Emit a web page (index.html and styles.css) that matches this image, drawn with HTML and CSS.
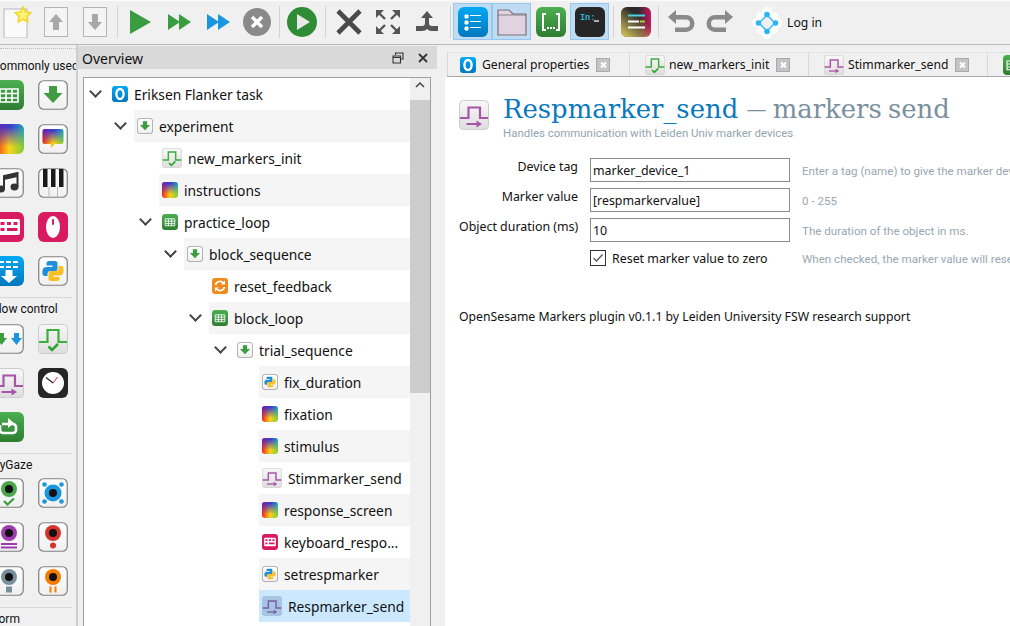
FILE: index.html
```html
<!DOCTYPE html>
<html lang="en">
<head>
<meta charset="utf-8">
<title>OpenSesame</title>
<link rel="stylesheet" href="styles.css">
</head>
<body>
<svg class="defs" width="0" height="0" aria-hidden="true">
  <defs>
    <linearGradient id="gTile" x1="0" y1="0" x2="0" y2="1"><stop offset="0" stop-color="#ffffff"/><stop offset="1" stop-color="#f0f0f0"/></linearGradient>
    <linearGradient id="gMark" x1="0" y1="0" x2="0" y2="1"><stop offset="0" stop-color="#f8f8f8"/><stop offset="1" stop-color="#dedede"/></linearGradient>
    <linearGradient id="gGreen" x1="0" y1="0" x2="0" y2="1"><stop offset="0" stop-color="#4caf50"/><stop offset="1" stop-color="#2e7d32"/></linearGradient>
    <linearGradient id="gBlue" x1="0" y1="0" x2="0" y2="1"><stop offset="0" stop-color="#03a9f4"/><stop offset="1" stop-color="#0277bd"/></linearGradient>
    <linearGradient id="gTop" x1="0" y1="0" x2="1" y2="0"><stop offset="0" stop-color="#6a1fb8"/><stop offset=".55" stop-color="#3f3fc8"/><stop offset="1" stop-color="#1fa0c8"/></linearGradient>
    <linearGradient id="gBot" x1="0" y1="0" x2="1" y2="0"><stop offset="0" stop-color="#e8281e"/><stop offset=".5" stop-color="#fbd21a"/><stop offset="1" stop-color="#7ecb3a"/></linearGradient>
    <linearGradient id="gFade" x1="0" y1="0" x2="0" y2="1"><stop offset=".1" stop-color="#fff"/><stop offset=".75" stop-color="#000"/></linearGradient>
    <mask id="mFade" maskContentUnits="objectBoundingBox"><rect width="1" height="1" fill="url(#gFade)"/></mask>
    <linearGradient id="gReport" x1="0" y1="0" x2="1" y2="0"><stop offset="0" stop-color="#222222"/><stop offset=".55" stop-color="#2a2a2a"/><stop offset="1" stop-color="#c2185b"/></linearGradient>
    <linearGradient id="gReport2" x1="0" y1="1" x2=".6" y2=".3"><stop offset="0" stop-color="#e0d060"/><stop offset="1" stop-color="#e0d060" stop-opacity="0"/></linearGradient>

    <symbol id="i-osexp" viewBox="0 0 16 16"><rect width="16" height="16" rx="3" fill="url(#gBlue)"/><ellipse cx="8" cy="8" rx="3.6" ry="5" fill="none" stroke="#fff" stroke-width="2.4"/></symbol>
    <symbol id="i-seq" viewBox="0 0 30 30"><rect x=".75" y=".75" width="28.500" height="28.500" rx="5" fill="url(#gTile)" stroke="#808080" stroke-width="1.2"/><path d="M11 6h8v7h5.500L15 23 5.500 13H11z" fill="#3f9c41"/></symbol>
    <symbol id="i-loop" viewBox="0 0 30 30"><rect width="30" height="30" rx="6" fill="url(#gGreen)"/><path d="M6 9h18v13H6zM6 13.500h18M6 18h18M12 9v13M18 9v13" fill="none" stroke="#fff" stroke-width="1.600"/></symbol>
    <symbol id="i-sketch" viewBox="0 0 30 30"><rect width="30" height="30" rx="6" fill="url(#gBot)"/><rect width="30" height="30" rx="6" fill="url(#gTop)" mask="url(#mFade)"/></symbol>
    <symbol id="i-bubble" viewBox="0 0 30 30"><rect x=".75" y=".75" width="28.500" height="28.500" rx="5" fill="url(#gTile)" stroke="#808080" stroke-width="1.2"/><path d="M7 5h16a2.500 2.500 0 0 1 2.500 2.500v10a2.500 2.500 0 0 1-2.500 2.500h-6l-4 4v-4H7a2.500 2.500 0 0 1-2.500-2.500v-10A2.500 2.500 0 0 1 7 5z" fill="url(#gBot)"/><path d="M7 5h16a2.500 2.500 0 0 1 2.500 2.500v10a2.500 2.500 0 0 1-2.500 2.500h-6l-4 4v-4H7a2.500 2.500 0 0 1-2.500-2.500v-10A2.500 2.500 0 0 1 7 5z" fill="url(#gTop)" mask="url(#mFade)"/></symbol>
    <symbol id="i-music" viewBox="0 0 30 30"><rect x=".75" y=".75" width="28.500" height="28.500" rx="5" fill="url(#gTile)" stroke="#808080" stroke-width="1.2"/><ellipse cx="7" cy="21" rx="4" ry="3.400" fill="#333"/><ellipse cx="20.500" cy="19" rx="4" ry="3.400" fill="#333"/><path d="M10 21V8l13.500-3v14" fill="none" stroke="#333" stroke-width="2"/><path d="M10 8l13.500-3v4L10 12z" fill="#333"/></symbol>
    <symbol id="i-piano" viewBox="0 0 30 30"><rect x=".75" y=".75" width="28.500" height="28.500" rx="5" fill="url(#gTile)" stroke="#808080" stroke-width="1.2"/><path d="M5 1h4.500v18H5zM13 1h4.500v18H13zM21 1h4.500v18H21z" fill="#1b1b1b"/><path d="M11 19v10M19.500 19v10" stroke="#bbb"/></symbol>
    <symbol id="i-kbd" viewBox="0 0 30 30"><rect width="30" height="30" rx="6" fill="#d81b60"/><rect x="4" y="7" width="22" height="16" rx="2" fill="#fff"/><path d="M6.500 10h4v3h-4zM13 10h4v3h-4zM19.500 10h4v3h-4zM6.500 16h4v3h-4zM13 16h10.500v3H13z" fill="#d81b60"/></symbol>
    <symbol id="i-mouse" viewBox="0 0 30 30"><rect width="30" height="30" rx="6" fill="#d81b60"/><ellipse cx="15" cy="15" rx="7" ry="11" fill="#fff"/><rect x="14" y="7" width="2" height="6" rx="1" fill="#d81b60"/></symbol>
    <symbol id="i-form" viewBox="0 0 30 30"><rect width="30" height="30" rx="6" fill="url(#gBlue)"/><path d="M5 6h5M12 6h5M19 6h5M5 11h5M12 11h5M19 11h5" stroke="#fff" stroke-width="2"/><path d="M11.500 14h7v6h4.500L15 27 7 20h4.500z" fill="#fff"/></symbol>
    <symbol id="i-py" viewBox="0 0 30 30"><rect x=".75" y=".75" width="28.500" height="28.500" rx="5" fill="url(#gTile)" stroke="#808080" stroke-width="1.2"/><path d="M11 5h6a2.500 2.500 0 0 1 2.500 2.500V13a2 2 0 0 1-2 2h-5a3 3 0 0 0-3 3v2H7a2.500 2.500 0 0 1-2.500-2.500v-3A4 4 0 0 1 8.500 11h6V9.500h-6V7.500A2.500 2.500 0 0 1 11 5z" fill="#1f8fd8"/><path d="M19 25h-6a2.500 2.500 0 0 1-2.500-2.500V17a2 2 0 0 1 2-2h5a3 3 0 0 0 3-3v-2H23a2.500 2.500 0 0 1 2.500 2.500v3a4 4 0 0 1-4 4h-6v1.500h6v2A2.500 2.500 0 0 1 19 25z" fill="#f9bf25"/></symbol>
    <symbol id="i-coroutines" viewBox="0 0 30 30"><rect x=".75" y=".75" width="28.500" height="28.500" rx="5" fill="url(#gTile)" stroke="#808080" stroke-width="1.2"/><path d="M5 9h5v5h3l-5.500 7L2 14h3z" fill="#3f9c41"/><path d="M20 9h5v5h3l-5.500 7L17 14h3z" fill="#1a96e0"/></symbol>
    <symbol id="i-minit" viewBox="0 0 30 30"><rect x=".5" y=".5" width="29" height="29" rx="4" fill="url(#gMark)" stroke="#ccc"/><path d="M1 18h8.500V6h11v12H29" fill="none" stroke="#3cae3c" stroke-width="2.200"/><path d="M10.500 22.500l3.500 3.500 6-6" fill="none" stroke="#2ea52e" stroke-width="2.600"/></symbol>
    <symbol id="i-msend" viewBox="0 0 30 30"><rect x=".5" y=".5" width="29" height="29" rx="4" fill="url(#gMark)" stroke="#ccc"/><path d="M1 18h8.500V7.500H21V18h8" fill="none" stroke="#a855a8" stroke-width="2.200"/><path d="M7.500 24h11" stroke="#a855a8" stroke-width="2"/><path d="M17.500 20.500l5.500 3.500-5.500 3.500z" fill="#a855a8"/></symbol>
    <symbol id="i-msel" viewBox="0 0 30 30"><rect x=".5" y=".5" width="29" height="29" rx="4" fill="#a8c4e2" stroke="#a0bcd8"/><path d="M1 18h8.500V7.500H21V18h8" fill="none" stroke="#7460a8" stroke-width="2.200"/><path d="M7.500 24h11" stroke="#7460a8" stroke-width="2"/><path d="M17.500 20.500l5.500 3.500-5.500 3.500z" fill="#7460a8"/></symbol>
    <symbol id="i-clock" viewBox="0 0 30 30"><rect width="30" height="30" rx="6" fill="#262626"/><circle cx="15" cy="15" r="11" fill="#fff"/><path d="M15 15L8 9.500" stroke="#222" stroke-width="1.200"/><path d="M15 15l4.500-6" stroke="#d33" stroke-width="1"/></symbol>
    <symbol id="i-repeat" viewBox="0 0 30 30"><rect width="30" height="30" rx="6" fill="url(#gGreen)"/><path d="M8 12h11a3 3 0 0 1 3 3v3a3 3 0 0 1-3 3H9a3 3 0 0 1-3-3v-5" fill="none" stroke="#fff" stroke-width="2.600"/><path d="M14 6l6 5-6 5z" fill="#fff"/></symbol>
    <symbol id="i-gz-green" viewBox="0 0 30 30"><rect x=".75" y=".75" width="28.500" height="28.500" rx="5" fill="url(#gTile)" stroke="#808080" stroke-width="1.2"/><circle cx="15" cy="11" r="8" fill="#4ca64c"/><circle cx="15" cy="11" r="4" fill="#111"/><path d="M10 23l3.500 3.500L20 20.500" fill="none" stroke="#3f9c41" stroke-width="2.200"/></symbol>
    <symbol id="i-gz-blue" viewBox="0 0 30 30"><rect x=".75" y=".75" width="28.500" height="28.500" rx="5" fill="url(#gTile)" stroke="#808080" stroke-width="1.2"/><circle cx="15" cy="15" r="8.500" fill="#1a96e0"/><circle cx="15" cy="15" r="4" fill="#111"/><circle cx="6.500" cy="6.500" r="2.300" fill="#1a96e0"/><circle cx="23.500" cy="6.500" r="2.300" fill="#1a96e0"/><circle cx="6.500" cy="23.500" r="2.300" fill="#1a96e0"/><circle cx="23.500" cy="23.500" r="2.300" fill="#1a96e0"/></symbol>
    <symbol id="i-gz-purple" viewBox="0 0 30 30"><rect x=".75" y=".75" width="28.500" height="28.500" rx="5" fill="url(#gTile)" stroke="#808080" stroke-width="1.2"/><circle cx="15" cy="11" r="8" fill="#9c3cb0"/><circle cx="15" cy="11" r="4" fill="#111"/><path d="M7 22h16M7 25.500h16" stroke="#9c3cb0" stroke-width="2"/></symbol>
    <symbol id="i-gz-red" viewBox="0 0 30 30"><rect x=".75" y=".75" width="28.500" height="28.500" rx="5" fill="url(#gTile)" stroke="#808080" stroke-width="1.2"/><circle cx="15" cy="11" r="8" fill="#d8322e"/><circle cx="15" cy="11" r="4" fill="#111"/><circle cx="15" cy="23.500" r="3" fill="#d8322e"/></symbol>
    <symbol id="i-gz-grey" viewBox="0 0 30 30"><rect x=".75" y=".75" width="28.500" height="28.500" rx="5" fill="url(#gTile)" stroke="#808080" stroke-width="1.2"/><circle cx="15" cy="11" r="8" fill="#78909c"/><circle cx="15" cy="11" r="4" fill="#111"/><rect x="12" y="20.500" width="6" height="6" fill="#78909c"/></symbol>
    <symbol id="i-gz-orange" viewBox="0 0 30 30"><rect x=".75" y=".75" width="28.500" height="28.500" rx="5" fill="url(#gTile)" stroke="#808080" stroke-width="1.2"/><circle cx="15" cy="11" r="8" fill="#f57c00"/><circle cx="15" cy="11" r="4" fill="#111"/><path d="M12.500 20.500v6M17.500 20.500v6" stroke="#f57c00" stroke-width="2"/></symbol>
    <symbol id="i-reset" viewBox="0 0 16 16"><rect width="16" height="16" rx="3" fill="#f08a1d"/><path d="M3.500 7a4.600 4.600 0 0 1 8.300-1.500M12.500 9a4.600 4.600 0 0 1-8.300 1.500" fill="none" stroke="#fff" stroke-width="1.700"/><path d="M13 2.500v4H9zM3 13.500v-4h4z" fill="#fff"/></symbol>
  </defs>
</svg>

<header class="toolbar">
  <div class="tool"><svg width="30" height="32" viewBox="0 0 30 32"><rect x="2" y="3" width="23" height="29" fill="#fafafa" stroke="#b8b8b8"/><path d="M21 1l2.400 4.900 5.400.8-3.900 3.800.9 5.400L21 13.400l-4.800 2.500.9-5.400-3.900-3.800 5.400-.8z" fill="#fff176" stroke="#f2d41b" stroke-width="1.500"/></svg></div>
  <div class="tool"><svg width="24" height="30" viewBox="0 0 24 30"><rect x=".5" y=".5" width="23" height="29" fill="#f4f4f4" stroke="#b5b5b5" stroke-width="1"/><path d="M12 7l7 8h-4v8H9v-8H5z" fill="#a8a8a8"/></svg></div>
  <div class="tool"><svg width="24" height="30" viewBox="0 0 24 30"><rect x=".5" y=".5" width="23" height="29" fill="#f4f4f4" stroke="#b5b5b5" stroke-width="1"/><path d="M12 23l-7-8h4V7h6v8h4z" fill="#a8a8a8"/></svg></div>
  <span class="sep s6"></span>
  <div class="tool"><svg width="24" height="26" viewBox="0 0 24 26"><path d="M2 1l21 12L2 25z" fill="#3a9c40"/></svg></div>
  <div class="tool"><svg width="24" height="18" viewBox="0 0 24 18"><path d="M1 1l12 8-12 8zM12 1l12 8-12 8z" fill="#3a9c40"/></svg></div>
  <div class="tool"><svg width="24" height="18" viewBox="0 0 24 18"><path d="M1 1l12 8-12 8zM12 1l12 8-12 8z" fill="#1a96e0"/></svg></div>
  <div class="tool"><svg width="28" height="28" viewBox="0 0 28 28"><circle cx="14" cy="14" r="14" fill="#8a8a8a"/><path d="M9 9l10 10M19 9L9 19" stroke="#fff" stroke-width="3.400"/></svg></div>
  <span class="sep s6"></span>
  <div class="tool"><svg width="30" height="30" viewBox="0 0 30 30"><circle cx="15" cy="15" r="15" fill="#2f8b34"/><path d="M10 7l13 8-13 8z" fill="#e8e8e8"/></svg></div>
  <span class="sep s8"></span>
  <div class="tool"><svg width="26" height="26" viewBox="0 0 26 26"><path d="M2 2l22 22M24 2L2 24" stroke="#4a4a4a" stroke-width="4.600"/></svg></div>
  <div class="tool"><svg width="26" height="26" viewBox="0 0 26 26"><path d="M1 1h8L1 9zM25 1h-8l8 8zM1 25h8l-8-8zM25 25h-8l8-8z" fill="#555"/><path d="M4 4l6 6M22 4l-6 6M4 22l6-6M22 22l-6-6" stroke="#555" stroke-width="2.400"/></svg></div>
  <div class="tool"><svg width="24" height="24" viewBox="0 0 24 24"><path d="M12 1l6 7h-4v5c0 2 1 3 3 3h6v5h-6c-2.500 0-4-.8-5-2-1 1.200-2.500 2-5 2H1v-5h6c2 0 3-1 3-3V8H6z" fill="#555"/></svg></div>
  <span class="sep"></span>
  <div class="tool on"><svg width="30" height="30" viewBox="0 0 30 30"><rect width="30" height="30" rx="6" fill="url(#gBlue)"/><path d="M7 8h3v3H7zM7 14h3v3H7zM7 20h3v3H7zM12 8.500h11M12 14.500h11M12 20.500h11" fill="#fff" stroke="#fff" stroke-width="1"/></svg></div>
  <div class="tool on"><svg width="30" height="28" viewBox="0 0 30 28"><path d="M1 2h11l4 4h13v21H1z" fill="#e0d2e0" stroke="#77707a" stroke-width="1.200"/><path d="M1 7h28" stroke="#77707a" stroke-width=".8"/></svg></div>
  <div class="tool"><svg width="30" height="30" viewBox="0 0 30 30"><rect width="30" height="30" rx="6" fill="url(#gGreen)"/><path d="M10 7H7v16h3M20 7h3v16h-3" fill="none" stroke="#fff" stroke-width="2"/><path d="M11 20h2v2h-2zM14 20h2v2h-2zM17 20h2v2h-2z" fill="#fff"/></svg></div>
  <div class="tool on"><svg width="30" height="30" viewBox="0 0 30 30"><rect width="30" height="30" rx="6" fill="#262626"/><text class="console-text" x="5" y="13">In:</text><path d="M19 14h5" stroke="#eee" stroke-width="1.400"/></svg></div>
  <span class="sep"></span>
  <div class="tool"><svg width="30" height="30" viewBox="0 0 30 30"><rect width="30" height="30" rx="6" fill="url(#gReport)"/><rect width="30" height="30" rx="6" fill="url(#gReport2)"/><path d="M7 8.500h17" stroke="#4dd0e1" stroke-width="2"/><path d="M7 14.500h11" stroke="#fff" stroke-width="2"/><path d="M19 14.500h5" stroke="#a4d233" stroke-width="2"/><path d="M7 20.500h17" stroke="#fff" stroke-width="2"/></svg></div>
  <span class="sep s6"></span>
  <div class="tool"><svg width="28" height="24" viewBox="0 0 28 24"><path d="M9 0v5h10a8.500 8.500 0 0 1 0 17H8v-4.500h11a4 4 0 0 0 0-8H9V14L1 7z" fill="#8a8a8a"/></svg></div>
  <div class="tool"><svg width="28" height="24" viewBox="0 0 28 24"><path d="M19 0v5H9a8.500 8.500 0 0 0 0 17h11v-4.500H9a4 4 0 0 1 0-8h10V14l8-7z" fill="#8a8a8a"/></svg></div>
  <div class="login">
    <svg width="30" height="32" viewBox="0 0 30 32"><g fill="#fff"><circle cx="15" cy="5" r="5"/><circle cx="15" cy="27" r="5"/><circle cx="5" cy="16" r="5"/><circle cx="25" cy="16" r="5"/><circle cx="8" cy="9" r="4"/><circle cx="22" cy="9" r="4"/><circle cx="8" cy="23" r="4"/><circle cx="22" cy="23" r="4"/></g><path d="M15 8l8 8-8 8-8-8z" fill="none" stroke="#29b6f6" stroke-width="1.400"/><g fill="#29b6f6"><circle cx="15" cy="7.500" r="2.800"/><circle cx="15" cy="24.500" r="2.800"/><circle cx="6.500" cy="16" r="2.800"/><circle cx="23.500" cy="16" r="2.800"/></g></svg>
    <span>Log in</span>
  </div>
</header>

<div class="work">
  <aside class="palette">
    <div class="grip"></div>
    <h2 class="pal-title">Commonly used</h2>
    <div class="pal-grid">
      <svg><use href="#i-loop"/></svg><svg><use href="#i-seq"/></svg>
      <svg><use href="#i-sketch"/></svg><svg><use href="#i-bubble"/></svg>
      <svg><use href="#i-music"/></svg><svg><use href="#i-piano"/></svg>
      <svg><use href="#i-kbd"/></svg><svg><use href="#i-mouse"/></svg>
      <svg><use href="#i-form"/></svg><svg><use href="#i-py"/></svg>
    </div>
    <h2 class="pal-title ruled wide">Flow control</h2>
    <div class="pal-grid">
      <svg><use href="#i-coroutines"/></svg><svg><use href="#i-minit"/></svg>
      <svg><use href="#i-msend"/></svg><svg><use href="#i-clock"/></svg>
      <svg><use href="#i-repeat"/></svg>
    </div>
    <h2 class="pal-title ruled">PyGaze</h2>
    <div class="pal-grid">
      <svg><use href="#i-gz-green"/></svg><svg><use href="#i-gz-blue"/></svg>
      <svg><use href="#i-gz-purple"/></svg><svg><use href="#i-gz-red"/></svg>
      <svg><use href="#i-gz-grey"/></svg><svg><use href="#i-gz-orange"/></svg>
    </div>
    <h2 class="pal-title ruled">Form</h2>
  </aside>

  <section class="overview">
    <div class="dock-title">
      <span class="dock-name">Overview</span>
      <svg class="dock-btn" width="12" height="12" viewBox="0 0 12 12"><path d="M3.500 3V1h7.500v6H9M1 4h7.500v7H1zM1 5.500h7.500" fill="none" stroke="#333" stroke-width="1.100"/></svg>
      <svg class="dock-btn" width="12" height="12" viewBox="0 0 12 12"><path d="M2 2l8 8M10 2l-8 8" stroke="#333" stroke-width="1.800"/></svg>
    </div>
    <div class="tree-box">
      <ul class="tree">
        <li class="row l0"><i class="chev"></i><div class="item"><svg class="ic"><use href="#i-osexp"/></svg><span>Eriksen Flanker task</span></div></li>
        <li class="row l1 alt"><i class="chev"></i><div class="item"><svg class="ic"><use href="#i-seq"/></svg><span>experiment</span></div></li>
        <li class="row l2"><i class="nochev"></i><div class="item"><svg class="ic wide"><use href="#i-minit"/></svg><span>new_markers_init</span></div></li>
        <li class="row l2 alt"><i class="nochev"></i><div class="item"><svg class="ic"><use href="#i-sketch"/></svg><span>instructions</span></div></li>
        <li class="row l2"><i class="chev"></i><div class="item"><svg class="ic"><use href="#i-loop"/></svg><span>practice_loop</span></div></li>
        <li class="row l3 alt"><i class="chev"></i><div class="item"><svg class="ic"><use href="#i-seq"/></svg><span>block_sequence</span></div></li>
        <li class="row l4"><i class="nochev"></i><div class="item"><svg class="ic"><use href="#i-reset"/></svg><span>reset_feedback</span></div></li>
        <li class="row l4 alt"><i class="chev"></i><div class="item"><svg class="ic"><use href="#i-loop"/></svg><span>block_loop</span></div></li>
        <li class="row l5"><i class="chev"></i><div class="item"><svg class="ic"><use href="#i-seq"/></svg><span>trial_sequence</span></div></li>
        <li class="row l6 alt"><i class="nochev"></i><div class="item"><svg class="ic"><use href="#i-py"/></svg><span>fix_duration</span></div></li>
        <li class="row l6"><i class="nochev"></i><div class="item"><svg class="ic"><use href="#i-sketch"/></svg><span>fixation</span></div></li>
        <li class="row l6 alt"><i class="nochev"></i><div class="item"><svg class="ic"><use href="#i-sketch"/></svg><span>stimulus</span></div></li>
        <li class="row l6"><i class="nochev"></i><div class="item"><svg class="ic wide"><use href="#i-msend"/></svg><span>Stimmarker_send</span></div></li>
        <li class="row l6 alt"><i class="nochev"></i><div class="item"><svg class="ic"><use href="#i-sketch"/></svg><span>response_screen</span></div></li>
        <li class="row l6"><i class="nochev"></i><div class="item"><svg class="ic"><use href="#i-kbd"/></svg><span>keyboard_respo...</span></div></li>
        <li class="row l6 alt"><i class="nochev"></i><div class="item"><svg class="ic"><use href="#i-py"/></svg><span>setrespmarker</span></div></li>
        <li class="row l6 sel"><i class="nochev"></i><div class="item"><svg class="ic wide"><use href="#i-msel"/></svg><span>Respmarker_send</span></div></li>
      </ul>
      <div class="scroll">
        <svg class="scroll-up" width="12" height="8" viewBox="0 0 12 8"><path d="M2 6l4-4 4 4" fill="none" stroke="#444" stroke-width="1.500"/></svg>
        <div class="thumb"></div>
      </div>
    </div>
  </section>

  <main class="main">
    <nav class="tabs">
      <div class="tab first"><svg class="tab-ic"><use href="#i-osexp"/></svg><span>General properties</span><b class="x"></b></div>
      <div class="tab"><svg class="tab-ic big"><use href="#i-minit"/></svg><span>new_markers_init</span><b class="x"></b></div>
      <div class="tab"><svg class="tab-ic big"><use href="#i-msend"/></svg><span>Stimmarker_send</span><b class="x"></b></div>
      <div class="tab"><svg class="tab-ic big"><use href="#i-loop"/></svg></div>
    </nav>
    <div class="panel">
      <div class="head">
        <svg class="head-ic"><use href="#i-msend"/></svg>
        <div>
          <h1 class="title">Respmarker_send <span class="title-sub"><span class="dash">—</span> markers send</span></h1>
          <p class="desc">Handles communication with Leiden Univ marker devices</p>
        </div>
      </div>
      <div class="form">
        <label class="lab">Device tag</label><div class="field">marker_device_1</div><span class="hint">Enter a tag (name) to give the marker device</span>
        <label class="lab">Marker value</label><div class="field">[respmarkervalue]</div><span class="hint">0 - 255</span>
        <label class="lab">Object duration (ms)</label><div class="field">10</div><span class="hint">The duration of the object in ms.</span>
        <span></span><div class="check"><svg class="box" width="16" height="16" viewBox="0 0 16 16"><rect x=".5" y=".5" width="15" height="15" fill="#fff" stroke="#333"/><path d="M3.500 8l3 3 6-6.500" fill="none" stroke="#555" stroke-width="1.300"/></svg><span>Reset marker value to zero</span></div><span class="hint">When checked, the marker value will reset</span>
      </div>
      <p class="credit">OpenSesame Markers plugin v0.1.1 by Leiden University FSW research support</p>
    </div>
  </main>
</div>
</body>
</html>
```

FILE: styles.css
```css
* { box-sizing: border-box; }
html, body { margin: 0; height: 100%; }
body {
  width: 1010px; height: 626px; overflow: hidden;
  background: #f0f0f0; color: #111;
  font-family: "Noto Sans", sans-serif; font-size: 14px;
  display: flex; flex-direction: column;
}
.defs { position: absolute; }
ul { list-style: none; margin: 0; padding: 0; }
h1, h2, p { margin: 0; font-weight: normal; }

.toolbar {
  flex: none; height: 45px; display: flex; align-items: center;
  margin-left: -3px; width: 1013px; padding-bottom: 2px;
  border-top: 1px solid #fbfbfb; border-bottom: 1px solid #b9b9b9;
}
.tool { width: 39px; height: 37px; display: flex; align-items: center; justify-content: center; border: 1px solid transparent; flex: none; }
.tool.on { background: #c0dcf3; border-color: #93c8f2; }
.sep { width: 7px; height: 32px; flex: none; position: relative; }
.sep.s6 { width: 6px; }
.sep.s8 { width: 8px; }
.sep::after { content: ""; position: absolute; left: 50%; top: 0; bottom: 0; width: 1px; background: #d2d2d2; }
.console-text { font-family: "Liberation Mono", monospace; font-size: 8.5px; font-weight: 700; fill: #2bb5d8; }
.login { display: flex; align-items: center; gap: 5px; margin-left: 13px; font-size: 12.2px; padding-top: 2px; }

.work { flex: 1; min-height: 0; display: flex; }

.palette { flex: none; width: 78px; overflow: hidden; border-right: 2px solid #cfcfcf; }
.grip { height: 5px; margin-top: 3px; border-top: 1px dotted #bcbcbc; }
.pal-title { margin-left: -8px; white-space: nowrap; font-family: Roboto, sans-serif; font-size: 12px; line-height: 18px; height: 18px; margin-top: 4px; margin-bottom: 5px; }
.pal-title.ruled { margin: 11px 0 5px; width: 72px; height: 20px; padding-top: 2px; border-top: 1px solid #d8d8d8; text-indent: -8px; }
.pal-title.ruled.wide { margin-bottom: 7px; }
.pal-grid { display: grid; grid-template-columns: 30px 30px; gap: 14px; margin-left: -6px; }
.pal-grid svg { width: 30px; height: 30px; display: block; }

.overview { flex: none; width: 359px; display: flex; flex-direction: column; margin-top: 1px; }
.dock-title { flex: none; height: 23px; background: #d9d9d9; display: flex; align-items: center; padding: 1px 8px 0 4px; gap: 13px; }
.dock-name { flex: 1; font-size: 14px; }
.tree-box { flex: 1; min-height: 0; margin: 8px 6px 0 5px; display: flex; background: #fff; border-left: 1px solid #a0a0a0; border-top: 1px solid #a0a0a0; border-right: 1px solid #a0a0a0; overflow: hidden; }
.tree { flex: 1; min-width: 0; }
.row { display: flex; height: 32px; font-size: 13.8px; }
.l0 { padding-left: 0; }
.l1 { padding-left: 25px; }
.l2 { padding-left: 50px; }
.l3 { padding-left: 75px; }
.l4 { padding-left: 100px; }
.l5 { padding-left: 125px; }
.l6 { padding-left: 150px; }
.chev, .nochev { flex: none; width: 25px; position: relative; display: block; }
.chev::after { content: ""; position: absolute; left: 7px; top: 9px; width: 7px; height: 7px; border-right: 2px solid #444; border-bottom: 2px solid #444; transform: rotate(45deg); }
.item { flex: 1; display: flex; align-items: center; padding-left: 3px; gap: 6px; min-width: 0; white-space: nowrap; }
.alt .item { background: #f5f5f5; }
.sel .item { background: #cce8ff; }
.ic { width: 16px; height: 16px; flex: none; }
.ic.wide { width: 20px; height: 20px; }
.scroll { flex: none; width: 20px; background: #f0f0f0; position: relative; padding-top: 22px; }
.scroll-up { position: absolute; left: 4px; top: 3px; }
.thumb { height: 293px; background: #cdcdcd; }

.main { flex: 1; min-width: 0; margin-left: 8px; display: flex; flex-direction: column; }
.tabs { flex: none; height: 25px; margin-top: 7px; margin-left: 2px; display: flex; border-bottom: 1px solid #a8a8a8; }
.tab { flex: none; width: 179px; display: flex; align-items: center; padding: 0 0 0 12px; border-left: 1px solid #d8d8d8; border-top: 1px solid #e4e4e4; white-space: nowrap; font-size: 12.2px; }
.tab.first { width: 182px; }
.tab span { margin-left: 6px; }
.tab .x { width: 14px; height: 14px; margin-left: auto; margin-right: 18px; background: #c4c4c4; border: 1px solid #aaa; position: relative; }
.tab.first .x { margin-right: 19px; }
.tab .x::before, .tab .x::after { content: ""; position: absolute; left: 2.500px; top: 5px; width: 7px; height: 2px; background: #fff; transform: rotate(45deg); }
.tab .x::after { transform: rotate(-45deg); }
.tab-ic { width: 16px; height: 16px; flex: none; }
.tab-ic.big { width: 20px; height: 20px; margin-left: 3px; }
.tab-ic.big + span { margin-left: 4px; }

.panel { flex: 1; background: #fff; padding: 0 0 0 14px; white-space: nowrap; overflow: hidden; }
.head { display: flex; gap: 14px; margin-top: 16px; }
.head-ic { width: 30px; height: 30px; margin-top: 7px; flex: none; }
.title { font-family: "DejaVu Serif", serif; font-size: 25.9px; line-height: 33px; color: #0a78bd; }
.title-sub { color: #7a909e; word-spacing: -2px; }
.dash { font-size: 20px; vertical-align: 2px; }
.desc { font-family: Roboto, sans-serif; font-size: 11.45px; line-height: 14px; color: #93a5b1; }
.form { display: grid; grid-template-columns: 119px 200px auto; column-gap: 12px; row-gap: 6px; margin-top: 18px; align-items: center; width: 700px; }
.lab { font-size: 12.4px; text-align: right; align-self: start; line-height: 18px; }
.field { height: 24px; border: 1px solid #8c8c8c; background: #fff; font-size: 12.4px; line-height: 24px; padding-left: 2px; }
.hint { font-family: Roboto, sans-serif; font-size: 11.6px; color: #98a7b2; padding-top: 1px; }
.check { display: flex; align-items: center; gap: 6px; font-size: 12.4px; height: 20px; }
.box { flex: none; }
.credit { margin-top: 40px; font-size: 12.24px; }
```
